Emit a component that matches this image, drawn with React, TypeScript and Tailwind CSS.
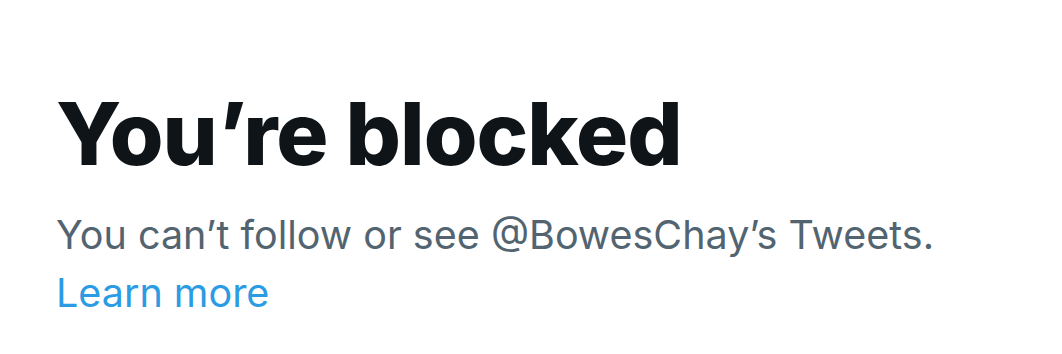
export default function App() {
  return (
    <div className="w-[1062px] h-[354px] bg-white font-['Inter',sans-serif] pl-[56px] pt-[84px]">
      <h1 className="text-[87px] leading-[100px] font-extrabold text-[#0f1419] tracking-[-1px]">
        You’re blocked
      </h1>
      <p className="mt-[22px] text-[39.5px] leading-[58px] text-[#536471]">
        You can’t follow or see @BowesChay’s Tweets.
        <br />
        <a className="text-[#2b9be4]">Learn more</a>
      </p>
    </div>
  );
}
